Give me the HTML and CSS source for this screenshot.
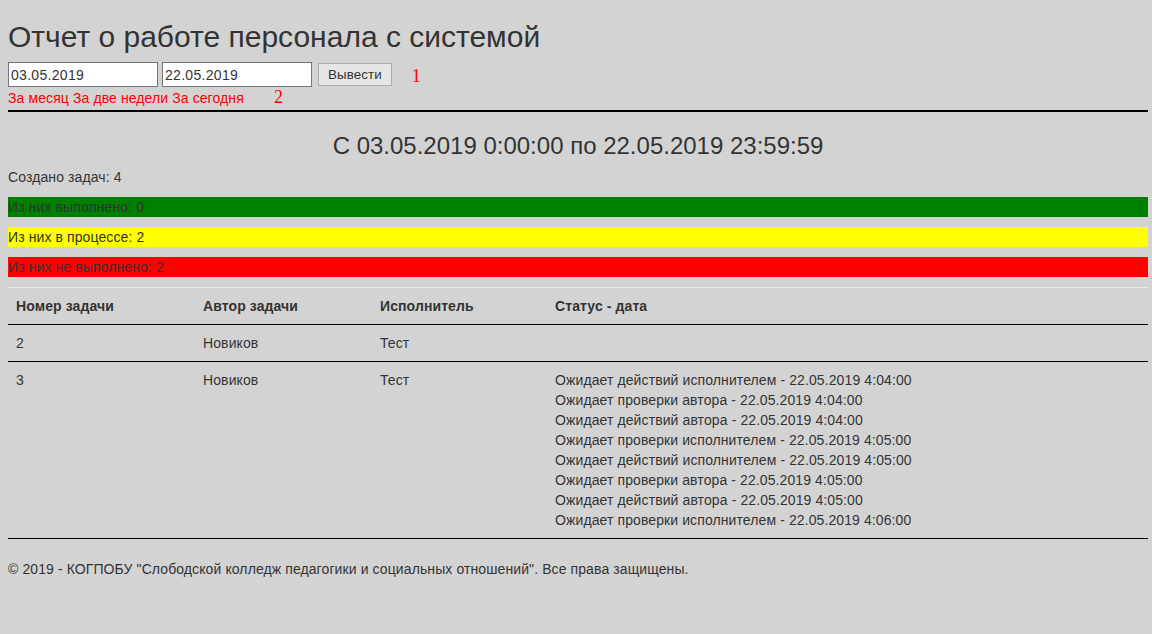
FILE: index.html
```html
<!DOCTYPE html>
<html lang="ru">
<head>
<meta charset="utf-8">
<title>Отчет о работе персонала с системой</title>
<link rel="stylesheet" href="styles.css">
</head>
<body>
<div class="page">
  <h1 class="title">Отчет о работе персонала с системой</h1>
  <form class="filter">
    <input class="date-input" type="text" value="03.05.2019">
    <input class="date-input date-input-2" type="text" value="22.05.2019">
    <button class="submit" type="button">Вывести</button>
    <span class="marker marker-1">1</span>
  </form>
  <div class="quick-links">
    <a class="quick-link" href="#">За месяц</a> <a class="quick-link" href="#">За две недели</a> <a class="quick-link" href="#">За сегодня</a><span class="marker marker-2">2</span>
  </div>
  <hr class="divider">
  <h3 class="period">С 03.05.2019 0:00:00 по 22.05.2019 23:59:59</h3>
  <p class="stat">Создано задач: 4</p>
  <p class="stat bar bar-green">Из них выполнено: 0</p>
  <p class="stat bar bar-yellow">Из них в процессе: 2</p>
  <p class="stat bar bar-red">Из них не выполнено: 2</p>
  <table class="tasks">
    <colgroup>
      <col class="col-num">
      <col class="col-author">
      <col class="col-exec">
      <col class="col-status">
    </colgroup>
    <thead>
      <tr>
        <th>Номер задачи</th>
        <th>Автор задачи</th>
        <th>Исполнитель</th>
        <th>Статус - дата</th>
      </tr>
    </thead>
    <tbody>
      <tr>
        <td>2</td>
        <td>Новиков</td>
        <td>Тест</td>
        <td></td>
      </tr>
      <tr>
        <td>3</td>
        <td>Новиков</td>
        <td>Тест</td>
        <td>
          <div>Ожидает действий исполнителем - 22.05.2019 4:04:00</div>
          <div>Ожидает проверки автора - 22.05.2019 4:04:00</div>
          <div>Ожидает действий автора - 22.05.2019 4:04:00</div>
          <div>Ожидает проверки исполнителем - 22.05.2019 4:05:00</div>
          <div>Ожидает действий исполнителем - 22.05.2019 4:05:00</div>
          <div>Ожидает проверки автора - 22.05.2019 4:05:00</div>
          <div>Ожидает действий автора - 22.05.2019 4:05:00</div>
          <div>Ожидает проверки исполнителем - 22.05.2019 4:06:00</div>
        </td>
      </tr>
    </tbody>
  </table>
  <footer class="footer">
    <p>© 2019 - КОГПОБУ "Слободской колледж педагогики и социальных отношений". Все права защищены.</p>
  </footer>
</div>
</body>
</html>
```

FILE: styles.css
```css
html, body {
  margin: 0;
  padding: 0;
  background: #d3d3d3;
}

body {
  font-family: "Liberation Sans", Arial, Helvetica, sans-serif;
  font-size: 14px;
  line-height: 20px;
  letter-spacing: 0.1px;
  color: #333;
}

.page {
  padding: 0 4px 0 8px;
}

.title {
  font-size: 30px;
  font-weight: normal;
  line-height: 33px;
  letter-spacing: 0;
  margin: 20px 0 9px;
}

.filter {
  display: flex;
  align-items: center;
  height: 25px;
  margin: 0;
}

.date-input {
  box-sizing: border-box;
  width: 150px;
  height: 25px;
  border: 1px solid #767676;
  background: #fff;
  padding: 1px 2px 0;
  font-family: "Liberation Sans", Arial, sans-serif;
  font-size: 14px;
  letter-spacing: 0.3px;
  color: #333;
  margin: 0;
}

.date-input-2 {
  margin-left: 4px;
}

.submit {
  box-sizing: border-box;
  height: 23px;
  margin-left: 6px;
  padding: 0 9px;
  border: 1px solid #adadad;
  background: #e6e6e6;
  font-family: "Liberation Sans", Arial, sans-serif;
  font-size: 13.333px;
  letter-spacing: 0.1px;
  color: #333;
}

.marker {
  font-family: "Liberation Serif", "Times New Roman", serif;
  font-size: 18px;
  letter-spacing: 0;
  color: #f00;
}

.marker-1 {
  margin-left: 20px;
  margin-top: 2px;
}

.marker-2 {
  margin-left: 30px;
}

.quick-links {
  line-height: 20px;
  height: 20px;
}

.quick-link {
  color: #f00;
  text-decoration: none;
}

.divider {
  border: 0;
  border-top: 2px solid #000;
  margin: 3px 0 0;
  height: 0;
}

.period {
  font-size: 24px;
  font-weight: normal;
  line-height: 26px;
  letter-spacing: 0;
  text-align: center;
  margin: 21px 0 8px;
}

.stat {
  margin: 0 0 10px;
  height: 20px;
}

.bar-green {
  background: #008000;
}

.bar-yellow {
  background: #ff0;
}

.bar-red {
  background: #f00;
}

.tasks {
  width: 100%;
  border-collapse: collapse;
  table-layout: fixed;
  border-top: 1px solid #e8e8e8;
}

.col-num { width: 187px; }
.col-author { width: 177px; }
.col-exec { width: 175px; }

.tasks th,
.tasks td {
  padding: 8px;
  text-align: left;
  vertical-align: top;
  line-height: 20px;
}

.tasks th {
  font-weight: bold;
  border-bottom: 1px solid #000;
}

.tasks td {
  border-bottom: 1px solid #000;
}

.footer p {
  margin: 20px 0 0;
}
```
